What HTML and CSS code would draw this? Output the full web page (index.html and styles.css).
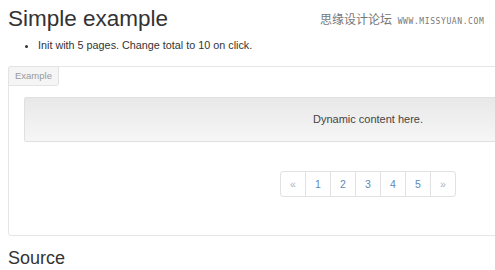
FILE: index.html
```html
<!DOCTYPE html>
<html lang="en">
  <head>
    <meta charset="UTF-8" />
    <meta name="viewport" content="width=device-width, initial-scale=1.0" />
    <title>Simple example</title>
    <link rel="stylesheet" href="styles.css">
  </head>
  <body>
    <div class="page">
      <div class="watermark">思缘设计论坛 <span class="watermark-url">WWW.MISSYUAN.COM</span></div>
      <h1 class="title">Simple example</h1>
      <ul class="notes">
        <li>Init with 5 pages. Change total to 10 on click.</li>
      </ul>
      <div class="example">
        <span class="example-label">Example</span>
        <div class="well" id="content">Dynamic content here.</div>
        <div class="pager">
          <ul class="pagination" id="pagination">
            <li class="disabled"><a href="#">&laquo;</a></li>
            <li><a href="#">1</a></li>
            <li><a href="#">2</a></li>
            <li><a href="#">3</a></li>
            <li><a href="#">4</a></li>
            <li><a href="#">5</a></li>
            <li><a href="#">&raquo;</a></li>
          </ul>
        </div>
      </div>
      <h2 class="subtitle">Source</h2>
    </div>
  </body>
</html>
```

FILE: styles.css
```css
html,
body {
  margin: 0;
  padding: 0;
  background-color: #fff;
  overflow: hidden;
}

body {
  font-family: "Liberation Sans", Arial, sans-serif;
  color: #333;
}

.page {
  position: relative;
  width: 720px;
  padding: 0 8px;
}

.watermark {
  position: absolute;
  top: 4px;
  left: 320px;
  font-family: "Noto Sans CJK SC", sans-serif;
  font-size: 12px;
  color: #777;
  white-space: nowrap;
}

.watermark-url {
  font-family: "DejaVu Sans Mono", monospace;
  font-size: 8px;
  letter-spacing: 0.6px;
  margin-left: 3px;
}

.title {
  font-size: 22.5px;
  font-weight: normal;
  line-height: 26px;
  margin: 6px 0 0;
}

.notes {
  margin: 6px 0 0;
  padding-left: 30px;
  font-size: 10.8px;
  line-height: 15px;
}

.example {
  margin-top: 13px;
  border: 1px solid #e6e6e6;
  border-radius: 3px;
  padding: 0 15px 38px;
}

.example-label {
  display: inline-block;
  margin: -1px 0 0 -16px;
  padding: 0 6px;
  height: 18px;
  line-height: 18px;
  font-size: 9.5px;
  color: #999;
  background-color: #f5f5f5;
  border: 1px solid #e3e3e3;
  border-radius: 3px 0 3px 0;
  vertical-align: top;
}

.well {
  margin-top: 11px;
  height: 43px;
  line-height: 43px;
  text-align: center;
  font-size: 11px;
  color: #444;
  background: linear-gradient(#e8e8e8, #f6f6f6);
  border: 1px solid #e0e0e0;
  border-radius: 2px;
}

.pager {
  margin-top: 29px;
  text-align: center;
}

.pagination {
  display: inline-flex;
  list-style: none;
  margin: 0;
  padding: 0;
  border-radius: 3px;
}

.pagination a {
  display: block;
  width: 24px;
  height: 24px;
  line-height: 24px;
  margin-left: -1px;
  font-size: 10.5px;
  text-decoration: none;
  color: #5d8ab5;
  border: 1px solid #e2e2e2;
}

.pagination li:first-child a {
  margin-left: 0;
  border-radius: 3px 0 0 3px;
}

.pagination li:last-child a {
  border-radius: 0 3px 3px 0;
}

.pagination .disabled a,
.pagination li:last-child a {
  color: #aab4c0;
}

.subtitle {
  font-size: 18px;
  font-weight: normal;
  line-height: 22px;
  margin: 11px 0 0;
}
```
